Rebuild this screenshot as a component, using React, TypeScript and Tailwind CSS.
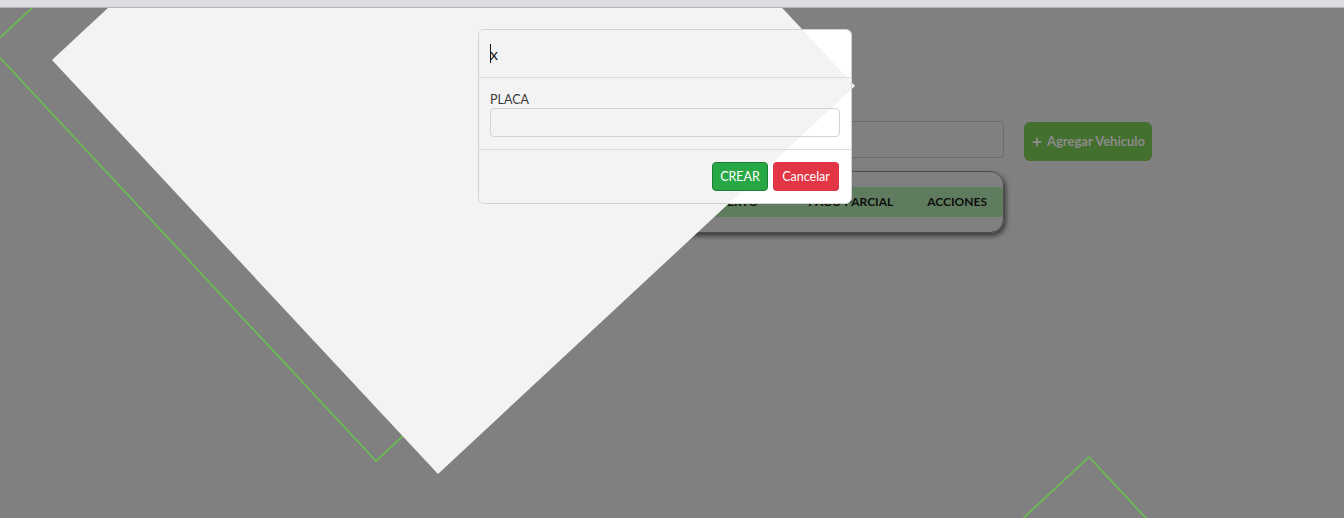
import { Plus } from "lucide-react";

const DIAMOND = "469,-328 855,86 438,474 52,60";

function Backdrop() {
    return (
        <svg className="absolute inset-0 z-10 pointer-events-none" width="1344" height="518" viewBox="0 0 1344 518">
            <polygon points="407,-341 793,73 376,461 -10,47" fill="none" stroke="#66c64a" strokeWidth="1.5" />
            <polygon points="1089,457 1475,871 1058,1259 672,845" fill="none" stroke="#66c64a" strokeWidth="1.5" />
            <polygon points={DIAMOND} fill="#f3f3f3" />
        </svg>
    );
}

function VehicleTable() {
    return (
        <div className="mt-[10px] w-[444px] h-[62px] border border-[#4c4c4c] rounded-[14px] shadow-[2px_3px_5px_rgba(0,0,0,0.55)] pt-[15px]">
            <div className="h-[30px] bg-[#5f7c5f] rounded-r-[4px] flex items-center justify-end pr-[16px] text-[12px] font-bold text-[#0e0e0e]">
                <span>ABIERTO</span>
                <span className="ml-[50px]">PAGO PARCIAL</span>
                <span className="ml-[34px]">ACCIONES</span>
            </div>
        </div>
    );
}

function CreateModal() {
    return (
        <div className="absolute left-[478px] top-[29px] z-20 w-[374px] h-[175px] bg-white border border-[#d2d2d2] rounded-[6px] overflow-hidden">
            <svg className="absolute left-[-479px] top-[-30px]" width="1344" height="518" viewBox="0 0 1344 518">
                <polygon points={DIAMOND} fill="#f3f3f3" />
            </svg>
            <div className="relative">
                <div className="h-[48px] px-[11px] flex items-center border-b border-[#dcdcdc]">
                    <span className="w-px h-[19px] bg-[#111]" />
                    <span className="text-[16px] text-[#222] -ml-px">x</span>
                </div>
                <div className="h-[72px] px-[11px] pt-[14px] border-b border-[#dcdcdc]">
                    <label className="block text-[12.5px] leading-[16px] text-[#3a3a3a]">PLACA</label>
                    <input type="text" className="block w-full h-[29px] border border-[#cfd4da] rounded-[4px] bg-transparent outline-none" />
                </div>
                <div className="h-[53px] px-[12px] flex items-center justify-end gap-[5px]">
                    <button className="w-[56px] h-[29px] pt-px bg-[#28a745] border border-[#1e7e34] rounded-[4px] text-white text-[12.5px]">CREAR</button>
                    <button className="w-[66px] h-[29px] pt-px bg-[#e23545] rounded-[4px] text-white text-[12.5px]">Cancelar</button>
                </div>
            </div>
        </div>
    );
}

export default function App() {
    return (
        <div className="relative w-full h-[518px] overflow-hidden bg-[#808080] font-['Lato','Noto_Sans',sans-serif]">
            <div className="relative z-30 h-[8px] bg-[#dcdce0] border-b border-[#b4b4b8]" />
            <main className="pt-[113px] pl-[560px]">
                <div className="flex items-start gap-[20px]">
                    <input type="text" className="w-[444px] h-[37px] border border-[#6a6a6a] rounded-[4px] bg-transparent outline-none" />
                    <button className="mt-px w-[128px] h-[39px] pt-px bg-[#44702f] rounded-[6px] flex items-center justify-center gap-[4px] text-[13px] font-bold text-[#8b8b8b]">
                        <Plus size={12} strokeWidth={4} />
                        Agregar Vehiculo
                    </button>
                </div>
                <VehicleTable />
            </main>
            <Backdrop />
            <CreateModal />
        </div>
    );
}
